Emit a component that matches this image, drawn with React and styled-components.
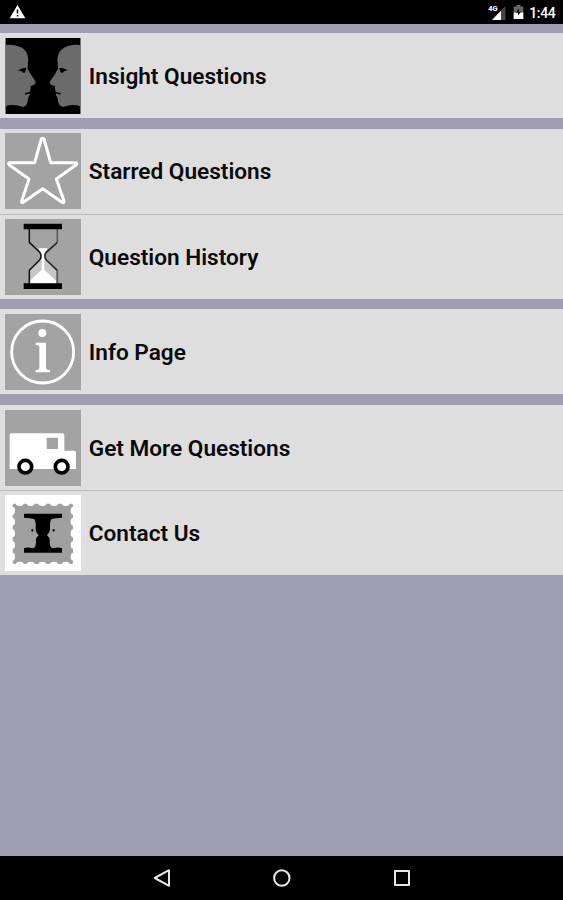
import styled, { createGlobalStyle } from 'styled-components';

const GlobalStyle = createGlobalStyle`
    body {
        margin: 0;
        background-color: #a09eb4;
        font-family: Roboto, sans-serif;
    }
`;

const Screen = styled.div`
    display: flex;
    flex-direction: column;
    height: 900px;
    overflow: hidden;
    background-color: #a09eb4;
`;

const StatusBar = styled.header`
    display: flex;
    align-items: center;
    flex: none;
    box-sizing: border-box;
    height: 23.5px;
    padding: 0 7.5px 0 9px;
    background-color: #000;
`;

const StatusIcons = styled.div`
    display: flex;
    align-items: center;
    margin-left: auto;
`;

const SignalIcon = styled.svg`
    width: 19px;
    height: 16px;
    margin-right: 6px;
`;

const BatteryIcon = styled.svg`
    width: 11px;
    height: 14px;
    margin-right: 5px;
`;

const WarningIcon = styled.svg`
    width: 17px;
    height: 15px;
`;

const Clock = styled.span`
    color: #fff;
    font-size: 14px;
    font-weight: 500;
    letter-spacing: -0.3px;
    line-height: 16px;
    padding-top: 2px;
`;

const Menu = styled.main`
    display: flex;
    flex-direction: column;
    gap: 10.6px;
    flex: 1;
    padding-top: 9.8px;
`;

const Group = styled.section`
    background-color: #dedede;
`;

const Row = styled.div`
    display: flex;
    align-items: center;
    box-sizing: border-box;
    height: 85px;
    padding-left: 5.3px;

    & + & {
        border-top: 1px solid #bdbdbd;
    }
`;

const Tile = styled.svg`
    flex: none;
    width: 76px;
    height: 76px;
    margin-right: 7.5px;
    background-color: ${(props) => props.$background || '#a3a3a3'};
`;

const Label = styled.span`
    color: #0a0a0a;
    font-size: 22.6px;
    font-weight: 600;
    line-height: 28px;
    padding-top: 2px;
    white-space: nowrap;
`;

const NavBar = styled.footer`
    display: flex;
    align-items: center;
    justify-content: center;
    flex: none;
    height: 44px;
    background-color: #000;
`;

const NavButton = styled.div`
    display: flex;
    justify-content: center;
    width: 120px;
`;

const NavIcon = styled.svg`
    width: 20px;
    height: 20px;
    fill: none;
    stroke: #e6e6e6;
    stroke-width: 2;
    stroke-linejoin: round;
`;

function FacesIcon() {
    return <Tile viewBox='16 112 228 228' $background='#000'>
        <path fill='#6b6b6b' d='M18 133 Q45 130 64 140 Q84 150 86 176 Q84 192 84 204 Q90 216 98 228 Q108 241 108 247 Q104 255 93 256 L93 264 Q92 270 89 276 Q91 279 90 284 Q84 290 84 302 Q82 317 70 319 Q38 308 18 317Z' />
        <path fill='#6b6b6b' d='M242 133 Q213 130 196 140 Q175 150 173 176 Q175 192 175 204 Q169 216 161 228 Q150 241 150 247 Q154 255 166 256 L166 264 Q167 270 170 276 Q168 279 169 284 Q175 290 175 302 Q178 317 190 319 Q220 308 242 317Z' />
        <path d='M55 209 Q66 201 79 201 L80 205 L75 216 Q69 218 66 212Z M204 209 Q193 201 180 201 L179 205 L184 216 Q190 218 193 212Z' />
        <path stroke='#000' strokeWidth='4' fill='none' d='M76 280 L92 275 M183 280 L167 275' />
        <path stroke='#777' strokeWidth='3' fill='none' d='M17.5 112V340 M242.5 112V340' />
    </Tile>;
}

function StarIcon() {
    return <Tile viewBox='16 41 228 228'>
        <path
            fill='none'
            stroke='#fff'
            strokeWidth='9'
            strokeLinejoin='round'
            d='M125 59 Q129 54 133 59 L153 130 L229 130 Q234 132 229 137 L170 179 L193 245 Q194 252 187 249 L129 208 L71 249 Q64 252 66 245 L88 179 L29 137 Q24 132 30 130 L105 130Z'
        />
    </Tile>;
}

function HourglassIcon() {
    return <Tile viewBox='16 26 228 228'>
        <path fill='#c6c6c6' d='M121 145 L137 145 L169 181 V215 L131 178 L91 215 V181Z' />
        <path fill='#fff' d='M116 114 H144 L134 130 V178 L169 211 V220 H91 V211 L126 178 V130Z' />
        <path fill='none' stroke='#111' strokeWidth='4.5' d='M89 54 V96 L120 126 Q128 137 120 149 L89 180 V222' />
        <path fill='none' stroke='#222' strokeWidth='4.5' d='M173 96 L140 126 Q131 137 140 149 L173 180' />
        <path fill='none' stroke='#555' strokeWidth='4.5' d='M173 54 V96 M173 180 V222' />
        <path d='M72 40 H187 V57 H72Z M72 219 H187 V236 H72Z' />
    </Tile>;
}

function InfoIcon() {
    return <Tile viewBox='16 27 228 228'>
        <circle cx='129' cy='141' r='93' fill='none' stroke='#fff' strokeWidth='8.5' />
        <circle cx='128' cy='84' r='12' fill='#fff' />
        <path fill='#fff' d='M108 113 H139 V188 Q139 195 151 195 V202 H108 V195 Q119 195 119 188 V127 Q119 120 108 120Z' />
    </Tile>;
}

function VanIcon() {
    return <Tile viewBox='16 29 228 228'>
        <path fill='#fff' d='M34 99 H190 Q194 99 194 104 V151 H224 Q229 151 229 156 V206 H30 V104 Q30 99 34 99Z' />
        <rect x='141' y='112' width='34' height='34' rx='2' fill='#a3a3a3' />
        <circle cx='77' cy='199' r='19' fill='#fff' stroke='#000' strokeWidth='11' />
        <circle cx='186' cy='199' r='19' fill='#fff' stroke='#000' strokeWidth='11' />
    </Tile>;
}

// centres of the holes punched along each side of the stamp
const holes = [60, 93, 128, 163, 198];

function StampIcon() {
    return <Tile viewBox='16 29 228 228' $background='#fff'>
        <rect x='39' y='55' width='181' height='181' rx='5' fill='#9f9f9f' />
        {holes.map((hole) => <g key={hole} fill='#fff'>
            <ellipse cx={hole} cy='54' rx='12' ry='8' />
            <ellipse cx={hole} cy='237' rx='12' ry='8' />
            <ellipse cx='38' cy={hole + 16} rx='8' ry='12' />
            <ellipse cx='221' cy={hole + 16} rx='8' ry='12' />
        </g>)}
        <path d='M73 85 H187 V97 Q164 97 155 102 Q150 109 151 126 Q153 138 142 150 L149 157 Q151 162 150 172 Q151 187 160 189 Q172 185 187 188 V202 H73 V188 Q88 185 100 189 Q108 187 109 172 Q108 162 110 157 L117 150 Q106 138 108 126 Q109 109 104 102 Q95 97 73 97Z' />
        <path d='M94 135 L100 132 L100 138Z M166 135 L160 132 L160 138Z' stroke='#000' strokeWidth='2' />
    </Tile>;
}

const groups = [
    [{ label: 'Insight Questions', Icon: FacesIcon }],
    [
        { label: 'Starred Questions', Icon: StarIcon },
        { label: 'Question History', Icon: HourglassIcon },
    ],
    [{ label: 'Info Page', Icon: InfoIcon }],
    [
        { label: 'Get More Questions', Icon: VanIcon },
        { label: 'Contact Us', Icon: StampIcon },
    ],
];

function App() {
    return <Screen>
        <GlobalStyle />
        <StatusBar>
            <WarningIcon viewBox='0 0 17 15'>
                <path fill='#fff' d='M8.5 1 L16.3 14.2 H0.7Z' />
                <path stroke='#000' strokeWidth='1.5' d='M8.5 5.5 V9.6 M8.5 10.9 V12.4' />
            </WarningIcon>
            <StatusIcons>
                <SignalIcon viewBox='0 0 19 16'>
                    <path fill='#444' d='M17.5 2 V16 H4Z' />
                    <path fill='#fff' d='M13 6.7 V16 H4Z' />
                    <text x='0.3' y='7.3' fill='#fff' fontSize='7.5' fontWeight='700'>4G</text>
                </SignalIcon>
                <BatteryIcon viewBox='0 0 11 14'>
                    <path fill='#666' d='M3.5 0 H7.5 V1.5 H10.3 V14 H0.7 V1.5 H3.5Z' />
                    <path fill='#fff' d='M0.7 7.5 H10.3 V14 H0.7Z' />
                    <path fill='#000' d='M5.8 3.2 L3 7.8 H5 V10.5 L8 6.8 H5.8Z' />
                </BatteryIcon>
                <Clock>1:44</Clock>
            </StatusIcons>
        </StatusBar>
        <Menu>
            {groups.map((items) => <Group key={items[0].label}>
                {items.map(({ label, Icon }) => <Row key={label}>
                    <Icon />
                    <Label>{label}</Label>
                </Row>)}
            </Group>)}
        </Menu>
        <NavBar>
            <NavButton>
                <NavIcon viewBox='0 0 20 20'><path d='M2.8 10 L17 2.2 V17.8Z' /></NavIcon>
            </NavButton>
            <NavButton>
                <NavIcon viewBox='0 0 20 20'><circle cx='9.8' cy='10' r='7.7' /></NavIcon>
            </NavButton>
            <NavButton>
                <NavIcon viewBox='0 0 20 20'><rect x='3' y='3' width='14' height='14' /></NavIcon>
            </NavButton>
        </NavBar>
    </Screen>;
}

export default App;
